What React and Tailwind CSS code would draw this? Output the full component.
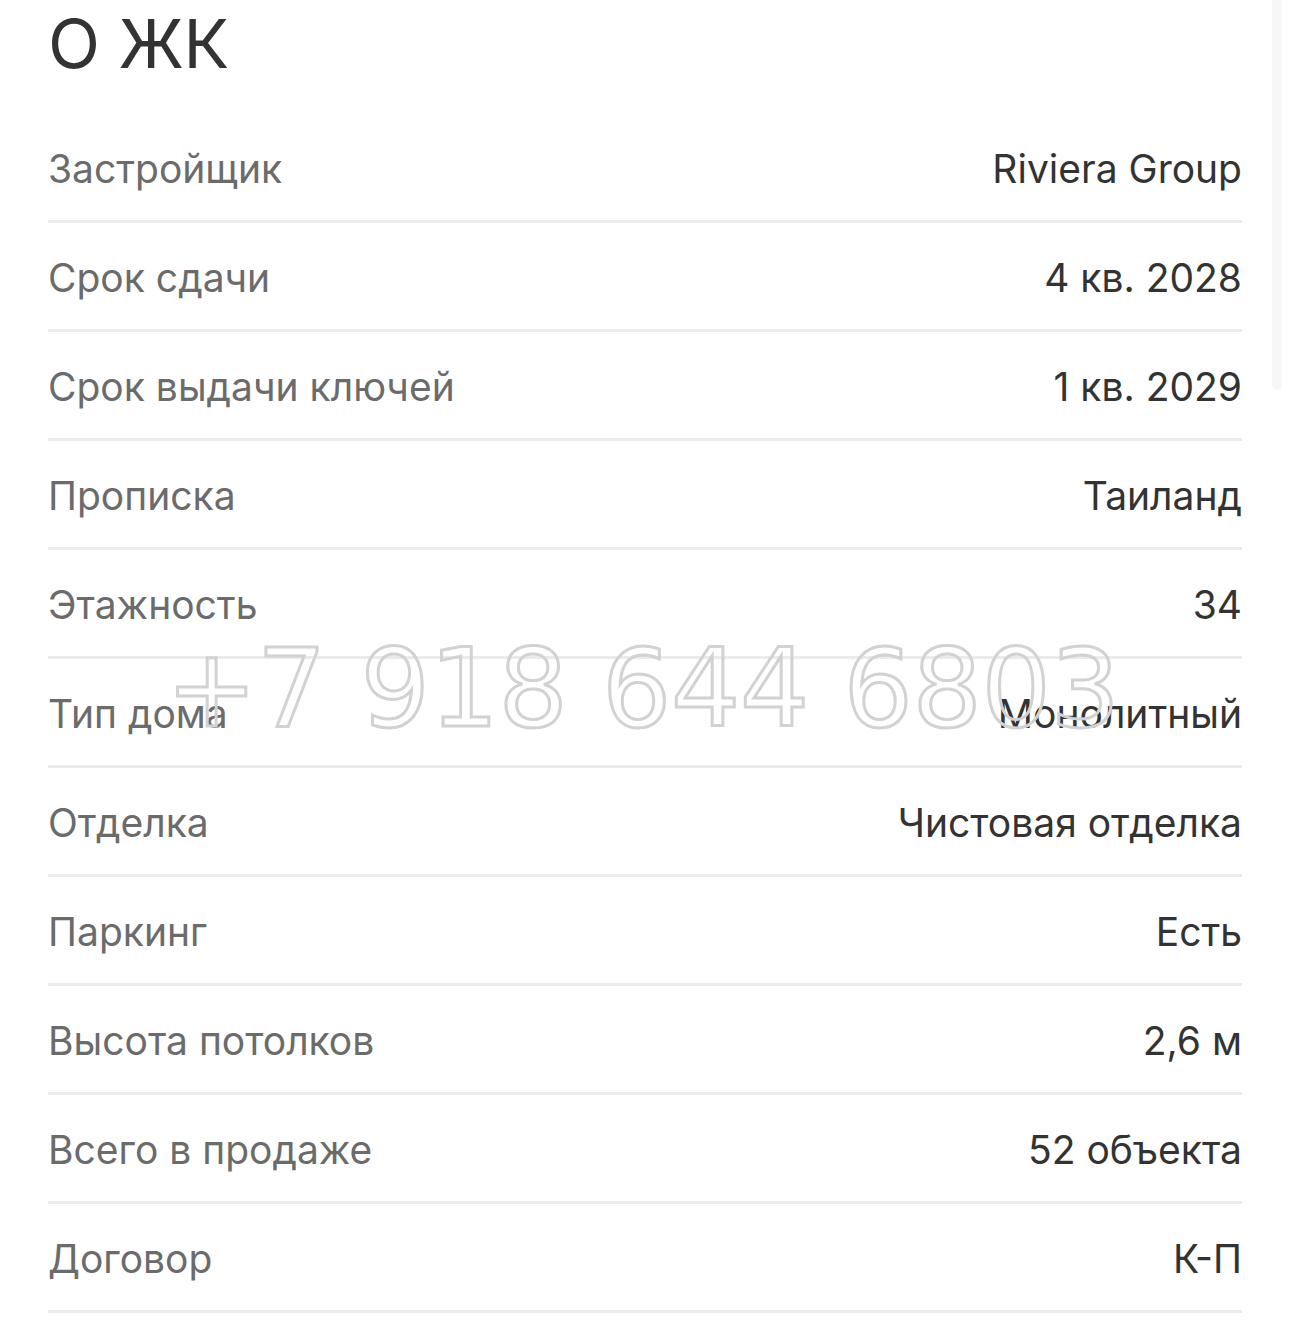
const rows = [
  ['Застройщик', 'Riviera Group'],
  ['Срок сдачи', '4 кв. 2028'],
  ['Срок выдачи ключей', '1 кв. 2029'],
  ['Прописка', 'Таиланд'],
  ['Этажность', '34'],
  ['Тип дома', 'Монолитный'],
  ['Отделка', 'Чистовая отделка'],
  ['Паркинг', 'Есть'],
  ['Высота потолков', '2,6 м'],
  ['Всего в продаже', '52 объекта'],
  ['Договор', 'К-П'],
];

const App = () => {
  return (
    <div className="relative w-[1290px] h-[1331px] overflow-hidden bg-white font-['Inter',sans-serif]">
      <div className="px-[48px]">
        <h1 className="h-[114px] pt-[3px] text-[68px] leading-[80px] text-[#333333] tracking-[-0.3px]">О ЖК</h1>

        <div className="w-[1194px]">
          {rows.map(([label, value]) => (
            <div key={label} className="h-[109px] flex items-center justify-between border-b-[3px] border-[#ebebeb] pt-[4px] text-[39px]">
              <span className="text-[#6b6b6b]">{label}</span>
              <span className="text-[#333333]">{value}</span>
            </div>
          ))}
        </div>
      </div>

      {/* scrollbar track */}
      <div className="absolute right-[8px] top-0 w-[10px] h-[390px] rounded-b-md bg-[#f7f7f7]" />

      {/* phone watermark */}
      <div className="absolute left-[166px] top-[614px] text-[109px] leading-[150px] tracking-[-0.3px] font-['DejaVu_Sans',sans-serif] text-transparent [-webkit-text-stroke:3px_#d2d2d2] pointer-events-none whitespace-nowrap">
        +7 918 644 6803
      </div>
    </div>
  );
};

export default App;
